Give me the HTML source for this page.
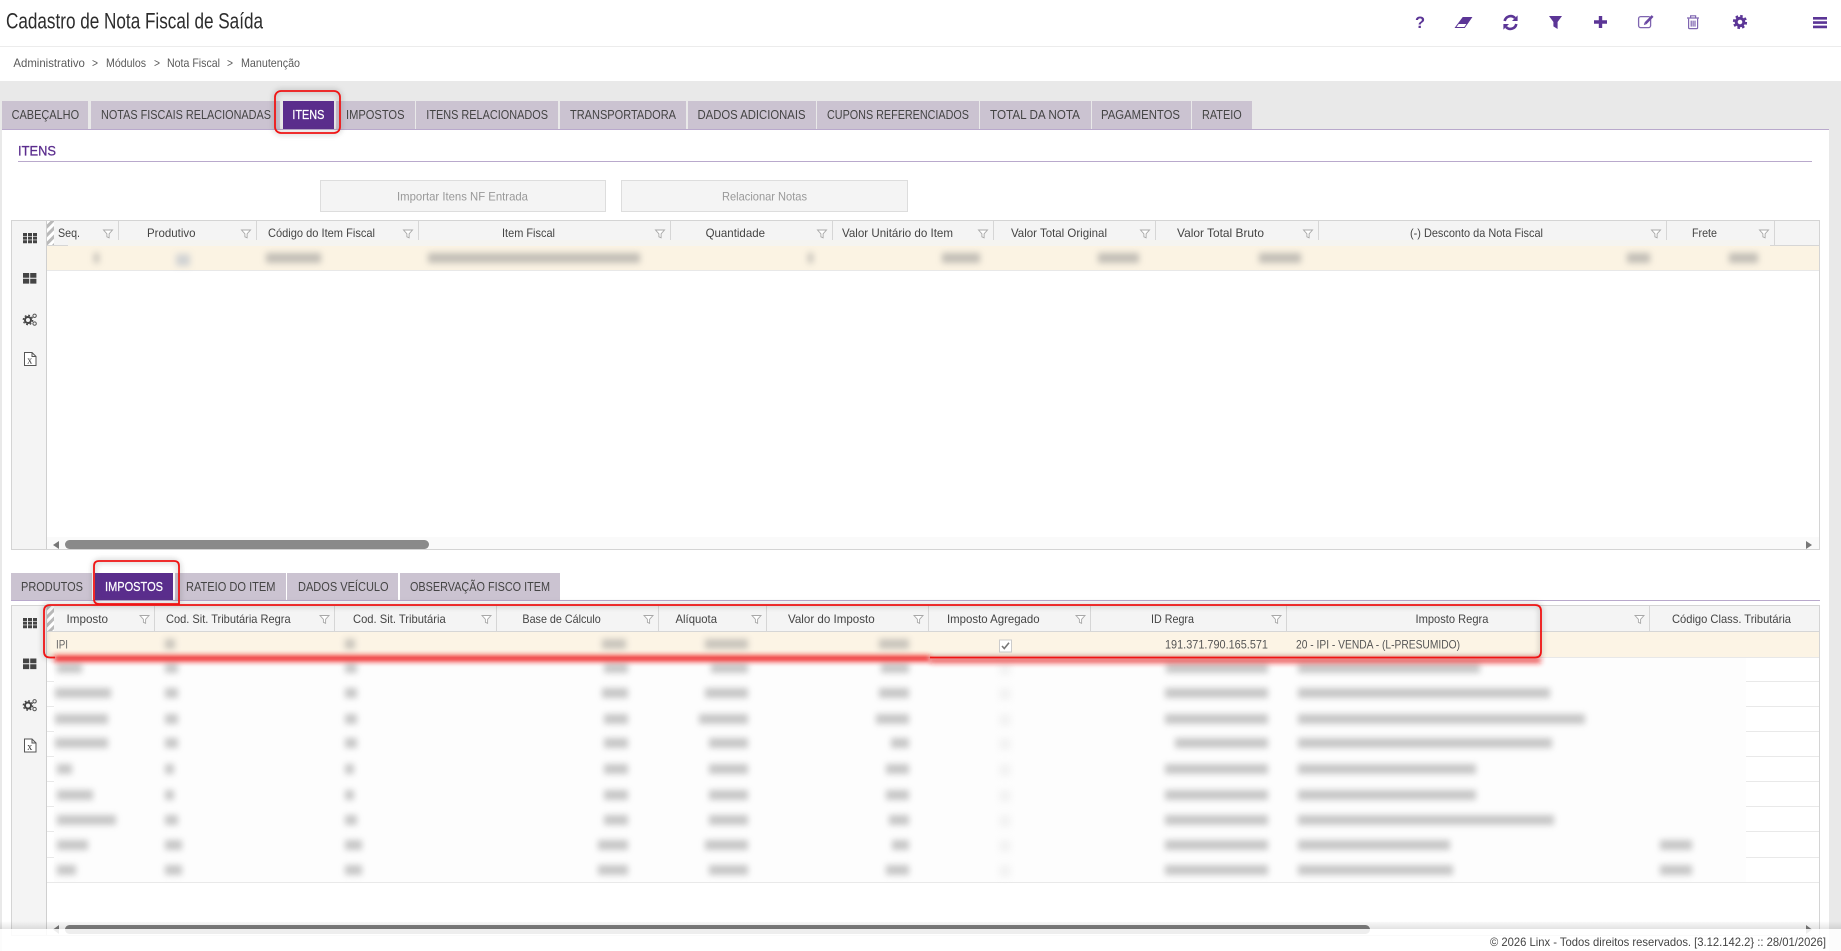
<!DOCTYPE html>
<html lang="pt-BR">
<head>
<meta charset="utf-8">
<title>Cadastro de Nota Fiscal de Saída</title>
<style>
html,body{margin:0;padding:0;background:#fff;width:1841px;height:951px;overflow:hidden}
svg{display:block}
text{font-family:"Liberation Sans",Arial,sans-serif;white-space:pre}
.tab{font-size:13px;fill:#444}
.tabA{font-size:13px;fill:#fff;stroke:#fff;stroke-width:.25}
.h{font-size:12px;fill:#444}
.sep{stroke:#d6d6d6;stroke-width:1}
.ln{stroke:#e9e9e9;stroke-width:1}
.ic{fill:#5b3596}
</style>
</head>
<body>
<svg xmlns="http://www.w3.org/2000/svg" width="1841" height="951" viewBox="0 0 1841 951">
<defs>
<filter id="b" x="-40%" y="-200%" width="180%" height="500%"><feGaussianBlur stdDeviation="3.2"/></filter>
<filter id="b2" x="-5%" y="-800%" width="110%" height="1700%"><feGaussianBlur stdDeviation="2.6"/></filter>
<filter id="b3" x="-5%" y="-30%" width="110%" height="160%"><feGaussianBlur stdDeviation="3"/></filter>
<pattern id="hatch" width="6" height="6" patternUnits="userSpaceOnUse" patternTransform="rotate(-45)"><rect width="6" height="6" fill="#fff"/><rect width="6" height="3" fill="#b9b9b9"/></pattern>
<polygon id="fn" points="0,0 9,0 5.6,3.8 5.6,7.8 3.4,6.8 3.4,3.8" fill="#fff" stroke="#a8a8a8" stroke-width="0.9"/>
<g id="ig">
<path fill="#444" d="M0 0h4v3H0zM5 0h4v3H5zM10 0h4v3h-4zM0 3.6h4v3H0zM5 3.6h4v3H5zM10 3.6h4v3h-4zM0 7.2h4v3H0zM5 7.2h4v3H5zM10 7.2h4v3h-4z"/>
</g>
<g id="il"><path fill="#444" d="M0 0h6.200v4.800H0zM7.200 0h6.200v4.800H7.200zM0 5.800h6.200v4.800H0zM7.200 5.800h6.200v4.800H7.200z"/></g>
<g id="ic">
<circle cx="5" cy="7" r="3" fill="none" stroke="#444" stroke-width="2"/>
<circle cx="5" cy="7" r="4.700" fill="none" stroke="#444" stroke-width="1.300" stroke-dasharray="1.800 1.900"/>
<circle cx="11.600" cy="2.800" r="1.700" fill="none" stroke="#555" stroke-width="1"/>
<circle cx="11.600" cy="10.600" r="1.700" fill="none" stroke="#555" stroke-width="1"/>
</g>
<g id="ix">
<path d="M0.500 0.500H8L12 4.500V13.500H0.500Z M8 0.500V4.500H12" fill="#fff" stroke="#555" stroke-width="1"/>
<text x="3.200" y="11.500" style="font-family:'Liberation Serif',serif;font-size:10px;fill:#333">x</text>
</g>
<linearGradient id="fg" x1="0" y1="0" x2="0" y2="1"><stop offset="0" stop-color="#000" stop-opacity="0"/><stop offset="1" stop-color="#000" stop-opacity="0.1"/></linearGradient>
</defs>

<!-- page -->
<rect width="1841" height="951" fill="#fff"/>
<rect x="0" y="46" width="1841" height="1" fill="#ececec"/>
<rect x="0" y="81" width="1841" height="870" fill="#e9e9e9"/>
<rect x="2" y="130" width="1827" height="821" fill="#fff"/>

<!-- header -->
<text x="6" y="28.500" font-size="22" fill="#2c2c2c" textLength="257" lengthAdjust="spacingAndGlyphs">Cadastro de Nota Fiscal de Saída</text>
<text x="1415" y="28" font-size="16.500" font-weight="bold" fill="#5b3596">?</text>
<path d="M1463 17.500H1471.500L1464.500 27.500H1455.500Z" fill="#fff" stroke="#5b3596" stroke-width="1"/>
<path class="ic" d="M1463 17H1472L1467.500 24H1458.500Z"/>
<g fill="none" stroke="#5b3596" stroke-width="2.600">
<path d="M1504.700 21A6 6 0 0 1 1515 18"/>
<path d="M1516.300 24A6 6 0 0 1 1506 27"/>
</g>
<path class="ic" d="M1517.600 15.400V21H1512ZM1503.400 29.600V24H1509Z"/>
<path class="ic" d="M1549 16H1562L1557.600 22V29L1553.400 26.400V22Z"/>
<path class="ic" d="M1598.800 16h3.400v4.300H1607v3.400h-4.800V28h-3.400v-4.300H1594v-3.400h4.800z"/>
<rect x="1638.600" y="16.600" width="12" height="11" rx="2" fill="none" stroke="#7f65b0" stroke-width="1.300"/>
<path d="M1645.500 23.300L1652.600 16" stroke="#6a48a3" stroke-width="2.600" fill="#fff"/>
<path d="M1643.800 25L1644.600 22.500L1646.400 24.200Z" fill="#6a48a3"/>
<g fill="none" stroke="#7f65b0" stroke-width="1.200">
<path d="M1688.600 18.600V27.600Q1688.600 28.600 1689.600 28.600H1696.600Q1697.600 28.600 1697.600 27.600V18.600"/>
<path d="M1687 18H1699M1690.600 18V15.800H1695.600V18M1691.200 20.600V26.600M1693.100 20.600V26.600M1695 20.600V26.600"/>
</g>
<circle cx="1740" cy="22" r="3.800" fill="none" stroke="#5b3596" stroke-width="3"/>
<circle cx="1740" cy="22" r="6.100" fill="none" stroke="#5b3596" stroke-width="2" stroke-dasharray="2.600 2.190"/>
<path class="ic" d="M1813 17h14v2.600h-14zM1813 21.300h14v2.600h-14zM1813 25.600h14v2.600h-14z"/>

<!-- breadcrumb -->
<g font-size="12" fill="#5a5a5a">
<text x="13.400" y="67" textLength="71.500" lengthAdjust="spacingAndGlyphs">Administrativo</text>
<text x="92" y="67" textLength="6" lengthAdjust="spacingAndGlyphs">&gt;</text>
<text x="106" y="67" textLength="40" lengthAdjust="spacingAndGlyphs">Módulos</text>
<text x="154" y="67" textLength="6" lengthAdjust="spacingAndGlyphs">&gt;</text>
<text x="167" y="67" textLength="53" lengthAdjust="spacingAndGlyphs">Nota Fiscal</text>
<text x="227" y="67" textLength="6" lengthAdjust="spacingAndGlyphs">&gt;</text>
<text x="241" y="67" textLength="59" lengthAdjust="spacingAndGlyphs">Manutenção</text>
</g>

<!-- main tabs -->
<g fill="#cbc3d1">
<rect x="2" y="101" width="86" height="28"/>
<rect x="91" y="101" width="189" height="28"/>
<rect x="336" y="101" width="79" height="28"/>
<rect x="416" y="101" width="142" height="28"/>
<rect x="560" y="101" width="126" height="28"/>
<rect x="688" y="101" width="128" height="28"/>
<rect x="817" y="101" width="162" height="28"/>
<rect x="980" y="101" width="111" height="28"/>
<rect x="1092" y="101" width="99" height="28"/>
<rect x="1192" y="101" width="60" height="28"/>
</g>
<rect x="283" y="101" width="51" height="28" fill="#5a2d8c"/>
<rect x="2" y="129" width="1827" height="1" fill="#b9a9cc"/>
<text class="tab" x="11.600" y="119" textLength="67.500" lengthAdjust="spacingAndGlyphs">CABEÇALHO</text>
<text class="tab" x="101" y="119" textLength="170" lengthAdjust="spacingAndGlyphs">NOTAS FISCAIS RELACIONADAS</text>
<text class="tabA" x="292.400" y="119" textLength="32" lengthAdjust="spacingAndGlyphs">ITENS</text>
<text class="tab" x="346" y="119" textLength="58.500" lengthAdjust="spacingAndGlyphs">IMPOSTOS</text>
<text class="tab" x="426.300" y="119" textLength="121.700" lengthAdjust="spacingAndGlyphs">ITENS RELACIONADOS</text>
<text class="tab" x="570" y="119" textLength="106" lengthAdjust="spacingAndGlyphs">TRANSPORTADORA</text>
<text class="tab" x="697.500" y="119" textLength="108" lengthAdjust="spacingAndGlyphs">DADOS ADICIONAIS</text>
<text class="tab" x="827" y="119" textLength="142" lengthAdjust="spacingAndGlyphs">CUPONS REFERENCIADOS</text>
<text class="tab" x="990" y="119" textLength="90" lengthAdjust="spacingAndGlyphs">TOTAL DA NOTA</text>
<text class="tab" x="1101" y="119" textLength="79" lengthAdjust="spacingAndGlyphs">PAGAMENTOS</text>
<text class="tab" x="1202" y="119" textLength="39.700" lengthAdjust="spacingAndGlyphs">RATEIO</text>

<!-- section title -->
<text x="18" y="155.500" font-size="14" fill="#5b2d8e" stroke="#5b2d8e" stroke-width=".3" textLength="38" lengthAdjust="spacingAndGlyphs">ITENS</text>
<rect x="18" y="161" width="1794" height="1" fill="#b9a9cc"/>

<!-- buttons -->
<rect x="320.500" y="180.500" width="285" height="31" fill="#f4f4f4" stroke="#ddd"/>
<rect x="621.500" y="180.500" width="286" height="31" fill="#f4f4f4" stroke="#ddd"/>
<text x="397" y="200.500" font-size="12" fill="#999" textLength="131" lengthAdjust="spacingAndGlyphs">Importar Itens NF Entrada</text>
<text x="722" y="200.500" font-size="12" fill="#999" textLength="85" lengthAdjust="spacingAndGlyphs">Relacionar Notas</text>

<!-- GRID 1 -->
<rect x="11.500" y="220.500" width="1808" height="329" fill="#fff" stroke="#d4d4d4"/>
<rect x="12" y="221" width="34" height="328" fill="#f4f4f4"/>
<rect x="46" y="221" width="1" height="328" fill="#cfcfcf"/>
<rect x="47" y="221" width="1772" height="24" fill="#f4f4f4"/>
<rect x="47" y="245" width="1772" height="1" fill="#d6d6d6"/>
<rect x="47" y="221" width="7" height="24" fill="url(#hatch)"/>
<rect x="47" y="246" width="1772" height="24" fill="#fbf3e3"/>
<rect x="47" y="270" width="1772" height="1" fill="#e8e8e8"/>
<g class="sep">
<path d="M118.500 221V245M256.500 221V245M418.500 221V245M670.500 221V245M832.500 221V245M993.500 221V245M1155.500 221V245M1318.500 221V245M1666.500 221V245M1774.500 221V245"/>
</g>
<g>
<use href="#fn" x="103.500" y="230"/><use href="#fn" x="241.500" y="230"/><use href="#fn" x="403.500" y="230"/><use href="#fn" x="655.500" y="230"/><use href="#fn" x="817.500" y="230"/><use href="#fn" x="978.500" y="230"/><use href="#fn" x="1140.500" y="230"/><use href="#fn" x="1303.500" y="230"/><use href="#fn" x="1651.500" y="230"/><use href="#fn" x="1759.500" y="230"/>
</g>
<text class="h" x="58" y="237" textLength="22" lengthAdjust="spacingAndGlyphs">Seq.</text>
<text class="h" x="147" y="237" textLength="48.500" lengthAdjust="spacingAndGlyphs">Produtivo</text>
<text class="h" x="268" y="237" textLength="107" lengthAdjust="spacingAndGlyphs">Código do Item Fiscal</text>
<text class="h" x="502" y="237" textLength="53" lengthAdjust="spacingAndGlyphs">Item Fiscal</text>
<text class="h" x="705.600" y="237" textLength="59.400" lengthAdjust="spacingAndGlyphs">Quantidade</text>
<text class="h" x="842" y="237" textLength="111" lengthAdjust="spacingAndGlyphs">Valor Unitário do Item</text>
<text class="h" x="1011" y="237" textLength="96" lengthAdjust="spacingAndGlyphs">Valor Total Original</text>
<text class="h" x="1177" y="237" textLength="87" lengthAdjust="spacingAndGlyphs">Valor Total Bruto</text>
<text class="h" x="1410" y="237" textLength="133" lengthAdjust="spacingAndGlyphs">(-) Desconto da Nota Fiscal</text>
<text class="h" x="1692" y="237" textLength="25" lengthAdjust="spacingAndGlyphs">Frete</text>
<!-- blur patch row 1 -->
<rect x="68" y="240" width="1702" height="6" fill="#f5f4f0"/>
<rect x="68" y="246" width="1702" height="21" fill="#fbf3e3"/>
<g filter="url(#b)" fill="#8a8a8a" opacity="0.5">
<rect x="94" y="253" width="5" height="10"/>
<rect x="266" y="253" width="55" height="10"/>
<rect x="428" y="253" width="212" height="10"/>
<rect x="808" y="253" width="5" height="10"/>
<rect x="942" y="253" width="38" height="10"/>
<rect x="1098" y="253" width="41" height="10"/>
<rect x="1259" y="253" width="42" height="10"/>
<rect x="1627" y="253" width="23" height="10"/>
<rect x="1729" y="253" width="29" height="10"/>
</g>
<rect x="176" y="254" width="14" height="12" fill="#a9b3c4" opacity="0.5" filter="url(#b)"/>
<!-- sidebar 1 icons -->
<use href="#ig" x="23" y="233"/>
<use href="#il" x="23" y="273"/>
<use href="#ic" x="23" y="313"/>
<use href="#ix" x="24" y="352"/>
<!-- scrollbar 1 -->
<rect x="47" y="537" width="1772" height="12" fill="#fafafa"/>
<rect x="65" y="540" width="364" height="9" rx="4.500" fill="#8a8a8a"/>
<path d="M59 541V549L53 545Z" fill="#777"/>
<path d="M1806 541V549L1812 545Z" fill="#777"/>
<rect x="11" y="549" width="1809" height="1" fill="#d4d4d4"/>

<!-- sub tabs -->
<g fill="#cbc3d1">
<rect x="11" y="573" width="81" height="27"/>
<rect x="175" y="573" width="111" height="27"/>
<rect x="287" y="573" width="111" height="27"/>
<rect x="400" y="573" width="160" height="27"/>
</g>
<rect x="95" y="573" width="78" height="27" fill="#5a2d8c"/>
<rect x="11" y="600" width="1809" height="1" fill="#b9a9cc"/>
<text class="tab" x="21" y="591" textLength="62" lengthAdjust="spacingAndGlyphs">PRODUTOS</text>
<text class="tabA" x="105" y="591" textLength="58" lengthAdjust="spacingAndGlyphs">IMPOSTOS</text>
<text class="tab" x="186" y="591" textLength="89.500" lengthAdjust="spacingAndGlyphs">RATEIO DO ITEM</text>
<text class="tab" x="298" y="591" textLength="90.600" lengthAdjust="spacingAndGlyphs">DADOS VEÍCULO</text>
<text class="tab" x="410" y="591" textLength="140" lengthAdjust="spacingAndGlyphs">OBSERVAÇÃO FISCO ITEM</text>

<!-- GRID 2 -->
<rect x="11.500" y="605.500" width="1808" height="330" fill="#fff" stroke="#d4d4d4"/>
<rect x="12" y="606" width="34" height="329" fill="#f4f4f4"/>
<rect x="46" y="606" width="1" height="329" fill="#cfcfcf"/>
<rect x="47" y="606" width="1772" height="25" fill="#f4f4f4"/>
<rect x="47" y="631" width="1772" height="1" fill="#d6d6d6"/>
<rect x="47" y="606" width="7" height="25" fill="url(#hatch)"/>
<rect x="47" y="632" width="1772" height="25" fill="#fcf4e5"/>
<rect x="47" y="657" width="1772" height="1" fill="#e8e8e8"/>
<g class="sep">
<path d="M154.500 606V631M334.500 606V631M496.500 606V631M658.500 606V631M766.500 606V631M928.500 606V631M1090.500 606V631M1286.500 606V631M1649.500 606V631"/>
</g>
<g>
<use href="#fn" x="140" y="615.500"/><use href="#fn" x="320" y="615.500"/><use href="#fn" x="482" y="615.500"/><use href="#fn" x="644" y="615.500"/><use href="#fn" x="752" y="615.500"/><use href="#fn" x="914" y="615.500"/><use href="#fn" x="1076" y="615.500"/><use href="#fn" x="1272" y="615.500"/><use href="#fn" x="1635" y="615.500"/>
</g>
<text class="h" x="66.500" y="623" textLength="41.500" lengthAdjust="spacingAndGlyphs">Imposto</text>
<text class="h" x="166" y="623" textLength="124.600" lengthAdjust="spacingAndGlyphs">Cod. Sit. Tributária Regra</text>
<text class="h" x="353" y="623" textLength="92.700" lengthAdjust="spacingAndGlyphs">Cod. Sit. Tributária</text>
<text class="h" x="522.400" y="623" textLength="78.400" lengthAdjust="spacingAndGlyphs">Base de Cálculo</text>
<text class="h" x="675.500" y="623" textLength="41.500" lengthAdjust="spacingAndGlyphs">Alíquota</text>
<text class="h" x="788" y="623" textLength="86.700" lengthAdjust="spacingAndGlyphs">Valor do Imposto</text>
<text class="h" x="947" y="623" textLength="92.600" lengthAdjust="spacingAndGlyphs">Imposto Agregado</text>
<text class="h" x="1151" y="623" textLength="43" lengthAdjust="spacingAndGlyphs">ID Regra</text>
<text class="h" x="1415.500" y="623" textLength="72.900" lengthAdjust="spacingAndGlyphs">Imposto Regra</text>
<text class="h" x="1672" y="623" textLength="119" lengthAdjust="spacingAndGlyphs">Código Class. Tributária</text>
<!-- row 1 -->
<text x="56" y="648.500" font-size="12" fill="#666" textLength="12" lengthAdjust="spacingAndGlyphs">IPI</text>
<text x="1165" y="648.500" font-size="12" fill="#555" textLength="103" lengthAdjust="spacingAndGlyphs">191.371.790.165.571</text>
<text x="1296" y="648.500" font-size="12" fill="#555" textLength="164" lengthAdjust="spacingAndGlyphs">20 - IPI - VENDA - (L-PRESUMIDO)</text>
<rect x="999.500" y="640" width="12" height="12" fill="#fff" stroke="#ccc"/>
<path d="M1002 646L1004.300 648.500L1009 642.800" fill="none" stroke="#777" stroke-width="1.600"/>
<g filter="url(#b)" fill="#8a8a8a" opacity="0.45">
<rect x="165" y="639" width="10" height="10"/>
<rect x="345" y="639" width="10" height="10"/>
<rect x="602" y="639" width="24" height="10"/>
<rect x="705" y="639" width="43" height="10"/>
<rect x="879" y="639" width="30" height="10"/>
</g>
<!-- row separators (edges only) -->
<g class="ln">
<path d="M47 681.500H54M47 706.500H54M47 731.500H54M47 756.500H54M47 781.500H54M47 806.500H54M47 831.500H54M47 857.500H54"/>
<path d="M1746 681.500H1819M1746 706.500H1819M1746 731.500H1819M1746 756.500H1819M1746 781.500H1819M1746 806.500H1819M1746 831.500H1819M1746 857.500H1819"/>
<path d="M47 882.500H1819"/>
</g>
<rect x="54" y="658" width="1692" height="224" fill="#fdfdfd"/>
<!-- blurred rows -->
<g filter="url(#b)" fill="#7c7c7c" opacity="0.42">
<rect x="57" y="663" width="25" height="10"/><rect x="55" y="688" width="56" height="10"/><rect x="55" y="714" width="53" height="10"/><rect x="55" y="738" width="53" height="10"/><rect x="57" y="764" width="15" height="10"/><rect x="57" y="790" width="36" height="10"/><rect x="57" y="815" width="59" height="10"/><rect x="57" y="840" width="31" height="10"/><rect x="57" y="865" width="19" height="10"/>
<rect x="165" y="663" width="13" height="10"/><rect x="165" y="688" width="13" height="10"/><rect x="165" y="714" width="13" height="10"/><rect x="165" y="738" width="13" height="10"/><rect x="165" y="764" width="9" height="10"/><rect x="165" y="790" width="9" height="10"/><rect x="165" y="815" width="13" height="10"/><rect x="165" y="840" width="17" height="10"/><rect x="165" y="865" width="17" height="10"/>
<rect x="345" y="663" width="12" height="10"/><rect x="345" y="688" width="12" height="10"/><rect x="345" y="714" width="12" height="10"/><rect x="345" y="738" width="12" height="10"/><rect x="345" y="764" width="9" height="10"/><rect x="345" y="790" width="9" height="10"/><rect x="345" y="815" width="12" height="10"/><rect x="345" y="840" width="17" height="10"/><rect x="345" y="865" width="17" height="10"/>
<rect x="604" y="663" width="24" height="10"/><rect x="602" y="688" width="26" height="10"/><rect x="604" y="714" width="24" height="10"/><rect x="604" y="738" width="24" height="10"/><rect x="604" y="764" width="24" height="10"/><rect x="604" y="790" width="24" height="10"/><rect x="604" y="815" width="24" height="10"/><rect x="598" y="840" width="30" height="10"/><rect x="598" y="865" width="30" height="10"/>
<rect x="711" y="663" width="37" height="10"/><rect x="705" y="688" width="43" height="10"/><rect x="699" y="714" width="49" height="10"/><rect x="709" y="738" width="39" height="10"/><rect x="709" y="764" width="39" height="10"/><rect x="709" y="790" width="39" height="10"/><rect x="709" y="815" width="39" height="10"/><rect x="705" y="840" width="43" height="10"/><rect x="709" y="865" width="39" height="10"/>
<rect x="881" y="663" width="28" height="10"/><rect x="879" y="688" width="30" height="10"/><rect x="876" y="714" width="33" height="10"/><rect x="891" y="738" width="18" height="10"/><rect x="886" y="764" width="23" height="10"/><rect x="886" y="790" width="23" height="10"/><rect x="889" y="815" width="20" height="10"/><rect x="892" y="840" width="17" height="10"/><rect x="886" y="865" width="23" height="10"/>
<rect x="1166" y="663" width="102" height="10"/><rect x="1165" y="688" width="103" height="10"/><rect x="1165" y="714" width="103" height="10"/><rect x="1175" y="738" width="93" height="10"/><rect x="1165" y="764" width="103" height="10"/><rect x="1165" y="790" width="103" height="10"/><rect x="1165" y="815" width="103" height="10"/><rect x="1165" y="840" width="103" height="10"/><rect x="1165" y="865" width="103" height="10"/>
<rect x="1298" y="663" width="182" height="10"/><rect x="1298" y="688" width="252" height="10"/><rect x="1298" y="714" width="287" height="10"/><rect x="1298" y="738" width="254" height="10"/><rect x="1298" y="764" width="178" height="10"/><rect x="1298" y="790" width="178" height="10"/><rect x="1298" y="815" width="256" height="10"/><rect x="1298" y="840" width="152" height="10"/><rect x="1298" y="865" width="155" height="10"/>
<rect x="1660" y="840" width="32" height="10"/><rect x="1660" y="865" width="32" height="10"/>
</g>
<g filter="url(#b)" fill="#ccc" opacity="0.2">
<rect x="999" y="663" width="12" height="12"/><rect x="999" y="688" width="12" height="12"/><rect x="999" y="714" width="12" height="12"/><rect x="999" y="738" width="12" height="12"/><rect x="999" y="764" width="12" height="12"/><rect x="999" y="790" width="12" height="12"/><rect x="999" y="815" width="12" height="12"/><rect x="999" y="840" width="12" height="12"/><rect x="999" y="865" width="12" height="12"/>
</g>
<!-- sidebar 2 icons -->
<use href="#ig" x="23" y="618"/>
<use href="#il" x="23" y="658.500"/>
<use href="#ic" x="23" y="698.500"/>
<use href="#ix" x="24" y="738.500"/>
<!-- scrollbar 2 -->
<rect x="47" y="922" width="1772" height="13" fill="#fbfbfb"/>
<rect x="65" y="925" width="1305" height="9" rx="4.500" fill="#7f7f7f"/>
<path d="M59 925V934L53 929.500Z" fill="#777"/>
<path d="M1806 925V934L1812 929.500Z" fill="#777"/>

<!-- annotation boxes -->
<g fill="none" stroke="#555" stroke-width="3" opacity="0.35" filter="url(#b3)">
<rect x="275" y="91" width="65" height="42" rx="6"/>
<rect x="94" y="561" width="85" height="43" rx="6"/>
<path d="M930 657.500H1535Q1541 657.500 1541 651.500V611Q1541 605 1535 605H50Q44 605 44 611V651.500Q44 657.500 50 657.500H54"/>
</g>
<g fill="none" stroke="#f01414" stroke-width="1.800">
<rect x="275" y="91" width="65" height="42" rx="6"/>
<path d="M179 604V566Q179 561 174 561H99Q94 561 94 566V599Q94 604 99 604Z"/>
<path d="M930 657.500H1535Q1541 657.500 1541 651.500V611Q1541 605 1535 605H50Q44 605 44 611V651.500Q44 657.500 50 657.500H55"/>
</g>
<rect x="54" y="655.500" width="876" height="6" fill="#f01414" opacity="0.95" filter="url(#b2)"/>
<rect x="930" y="658" width="611" height="5" fill="#f01414" opacity="0.75" filter="url(#b2)"/>

<!-- footer -->
<rect x="0" y="921" width="1841" height="8" fill="url(#fg)"/>
<rect x="0" y="929" width="1841" height="22" fill="#fff" fill-opacity="0.87"/>
<text x="1490" y="946" font-size="12" fill="#444" textLength="336" lengthAdjust="spacingAndGlyphs">© 2026 Linx - Todos direitos reservados. [3.12.142.2} :: 28/01/2026]</text>
</svg>
</body>
</html>
